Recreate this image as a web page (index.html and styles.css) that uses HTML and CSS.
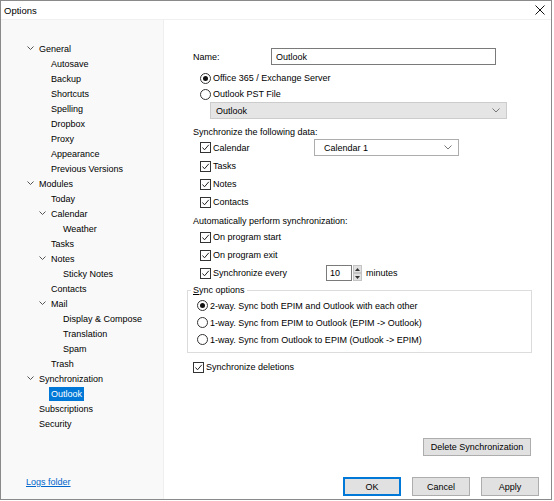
FILE: index.html
```html
<!DOCTYPE html>
<html>
<head>
<meta charset="utf-8">
<link rel="stylesheet" href="styles.css">
</head>
<body>
<div class="window">
  <div class="titlebar">
    <span class="title">Options</span>
    <svg class="close" width="10" height="10" viewBox="0 0 10 10"><path d="M0.5 0.5L9.5 9.5M9.5 0.5L0.5 9.5" stroke="#111" stroke-width="1" fill="none"/></svg>
  </div>
  <div class="main">
    <div class="sidebar">
      <ul class="tree">
        <li class="node l0"><span class="chev"><svg width="7" height="5" viewBox="0 0 7 5"><path d="M0.5 0.5L3.5 3.5L6.5 0.5" stroke="#555" fill="none"/></svg></span>General</li>
        <li class="node l1"><span class="chev"></span>Autosave</li>
        <li class="node l1"><span class="chev"></span>Backup</li>
        <li class="node l1"><span class="chev"></span>Shortcuts</li>
        <li class="node l1"><span class="chev"></span>Spelling</li>
        <li class="node l1"><span class="chev"></span>Dropbox</li>
        <li class="node l1"><span class="chev"></span>Proxy</li>
        <li class="node l1"><span class="chev"></span>Appearance</li>
        <li class="node l1"><span class="chev"></span>Previous Versions</li>
        <li class="node l0"><span class="chev"><svg width="7" height="5" viewBox="0 0 7 5"><path d="M0.5 0.5L3.5 3.5L6.5 0.5" stroke="#555" fill="none"/></svg></span>Modules</li>
        <li class="node l1"><span class="chev"></span>Today</li>
        <li class="node l1"><span class="chev"><svg width="7" height="5" viewBox="0 0 7 5"><path d="M0.5 0.5L3.5 3.5L6.5 0.5" stroke="#555" fill="none"/></svg></span>Calendar</li>
        <li class="node l2"><span class="chev"></span>Weather</li>
        <li class="node l1"><span class="chev"></span>Tasks</li>
        <li class="node l1"><span class="chev"><svg width="7" height="5" viewBox="0 0 7 5"><path d="M0.5 0.5L3.5 3.5L6.5 0.5" stroke="#555" fill="none"/></svg></span>Notes</li>
        <li class="node l2"><span class="chev"></span>Sticky Notes</li>
        <li class="node l1"><span class="chev"></span>Contacts</li>
        <li class="node l1"><span class="chev"><svg width="7" height="5" viewBox="0 0 7 5"><path d="M0.5 0.5L3.5 3.5L6.5 0.5" stroke="#555" fill="none"/></svg></span>Mail</li>
        <li class="node l2"><span class="chev"></span>Display &amp; Compose</li>
        <li class="node l2"><span class="chev"></span>Translation</li>
        <li class="node l2"><span class="chev"></span>Spam</li>
        <li class="node l1"><span class="chev"></span>Trash</li>
        <li class="node l0"><span class="chev"><svg width="7" height="5" viewBox="0 0 7 5"><path d="M0.5 0.5L3.5 3.5L6.5 0.5" stroke="#555" fill="none"/></svg></span>Synchronization</li>
        <li class="node l1"><span class="chev"></span><span class="selected">Outlook</span></li>
        <li class="node l0"><span class="chev"></span>Subscriptions</li>
        <li class="node l0"><span class="chev"></span>Security</li>
      </ul>
      <a class="logs">Logs folder</a>
    </div>
    <div class="content">
      <div class="row-name">
        <span class="name-label">Name:</span>
        <div class="textbox">Outlook</div>
      </div>
      <div class="opt r1"><span class="radio on"></span>Office 365 / Exchange Server</div>
      <div class="opt"><span class="radio"></span>Outlook PST File</div>
      <div class="combo disabled"><span>Outlook</span><svg width="8" height="5" viewBox="0 0 8 5"><path d="M0.5 0.5L4 4L7.5 0.5" stroke="#777" fill="none"/></svg></div>
      <div class="label sec1">Synchronize the following data:</div>
      <div class="opt cal-row"><span class="check"><svg width="9" height="9" viewBox="0 0 9 9"><path d="M1.5 4.5L3.5 6.8L7.8 1.8" stroke="#222" fill="none" stroke-width="1"/></svg></span><span class="cal-text">Calendar</span>
        <div class="combo cal"><span>Calendar 1</span><svg width="8" height="5" viewBox="0 0 8 5"><path d="M0.5 0.5L4 4L7.5 0.5" stroke="#777" fill="none"/></svg></div>
      </div>
      <div class="opt gap2"><span class="check"><svg width="9" height="9" viewBox="0 0 9 9"><path d="M1.5 4.5L3.5 6.8L7.8 1.8" stroke="#222" fill="none" stroke-width="1"/></svg></span>Tasks</div>
      <div class="opt gap2"><span class="check"><svg width="9" height="9" viewBox="0 0 9 9"><path d="M1.5 4.5L3.5 6.8L7.8 1.8" stroke="#222" fill="none" stroke-width="1"/></svg></span>Notes</div>
      <div class="opt gap2"><span class="check"><svg width="9" height="9" viewBox="0 0 9 9"><path d="M1.5 4.5L3.5 6.8L7.8 1.8" stroke="#222" fill="none" stroke-width="1"/></svg></span>Contacts</div>
      <div class="label sec2">Automatically perform synchronization:</div>
      <div class="opt"><span class="check"><svg width="9" height="9" viewBox="0 0 9 9"><path d="M1.5 4.5L3.5 6.8L7.8 1.8" stroke="#222" fill="none" stroke-width="1"/></svg></span>On program start</div>
      <div class="opt gap2"><span class="check"><svg width="9" height="9" viewBox="0 0 9 9"><path d="M1.5 4.5L3.5 6.8L7.8 1.8" stroke="#222" fill="none" stroke-width="1"/></svg></span>On program exit</div>
      <div class="opt gap2 every"><span class="check"><svg width="9" height="9" viewBox="0 0 9 9"><path d="M1.5 4.5L3.5 6.8L7.8 1.8" stroke="#222" fill="none" stroke-width="1"/></svg></span><span class="every-text">Synchronize every</span>
        <div class="spin"><div class="spin-box">10</div><div class="spin-btns"><span class="sb"><svg width="5" height="3" viewBox="0 0 5 3"><path d="M0 3L2.5 0L5 3Z" fill="#333"/></svg></span><span class="sb"><svg width="5" height="3" viewBox="0 0 5 3"><path d="M0 0L2.5 3L5 0Z" fill="#333"/></svg></span></div></div>
        <span class="minutes">minutes</span>
      </div>
      <fieldset class="group">
        <legend><u>S</u>ync options</legend>
        <div class="gopt"><span class="radio on"></span>2-way. Sync both EPIM and Outlook with each other</div>
        <div class="gopt"><span class="radio"></span>1-way. Sync from EPIM to Outlook (EPIM -&gt; Outlook)</div>
        <div class="gopt"><span class="radio"></span>1-way. Sync from Outlook to EPIM (Outlook -&gt; EPIM)</div>
      </fieldset>
      <div class="opt deletions"><span class="check"><svg width="9" height="9" viewBox="0 0 9 9"><path d="M1.5 4.5L3.5 6.8L7.8 1.8" stroke="#222" fill="none" stroke-width="1"/></svg></span>Synchronize deletions</div>
      <div class="spacer"></div>
      <div class="del-row"><button class="btn del">Delete Synchronization</button></div>
      <div class="btn-row">
        <button class="btn ok">OK</button>
        <button class="btn">Cancel</button>
        <button class="btn">Apply</button>
      </div>
    </div>
  </div>
</div>
</body>
</html>
```
FILE: styles.css
```css
html, body {
  margin: 0;
  padding: 0;
  background: #ffffff;
}
body {
  font-family: "Liberation Sans", Arial, sans-serif;
  font-size: 9px;
  color: #000;
  width: 554px;
  height: 501px;
  overflow: hidden;
}
.window {
  width: 552px;
  height: 500px;
  box-sizing: border-box;
  border: 1px solid #8a8a8a;
  display: flex;
  flex-direction: column;
  background: #fff;
}
.titlebar {
  height: 19px;
  flex: none;
  display: flex;
  align-items: center;
  justify-content: space-between;
  padding: 0 6px 0 3px;
  border-bottom: 1px solid #f0f0f0;
  box-sizing: border-box;
}
.title { font-size: 9.5px; }
.main {
  flex: 1;
  display: flex;
  min-height: 0;
}
.sidebar {
  width: 163px;
  flex: none;
  box-sizing: border-box;
  background: #f9f9f9;
  border-right: 1px solid #efefef;
  display: flex;
  flex-direction: column;
  padding-bottom: 9px;
}
.tree {
  list-style: none;
  margin: 0;
  padding: 21px 0 0 0;
}
.node {
  height: 15px;
  display: flex;
  align-items: center;
  white-space: nowrap;
}
.l0 { padding-left: 26px; }
.l1 { padding-left: 38px; }
.l2 { padding-left: 50px; }
.chev {
  width: 12px;
  flex: none;
  display: flex;
  align-items: center;
}
.selected {
  background: #0078d7;
  color: #fff;
  padding: 1px 2px;
  margin-left: -2px;
  line-height: 12px;
}
.logs {
  margin-top: auto;
  margin-left: 25px;
  color: #0066cc;
  text-decoration: underline;
  line-height: 15px;
}
.content {
  flex: 1;
  display: flex;
  flex-direction: column;
  padding: 28px 12px 3px 29px;
  box-sizing: border-box;
}
.row-name {
  display: flex;
  align-items: center;
  height: 17px;
}
.name-label { width: 78px; }
.textbox {
  width: 225px;
  height: 17px;
  box-sizing: border-box;
  border: 1px solid #7a7a7a;
  padding-left: 4px;
  display: flex;
  align-items: center;
}
.opt {
  display: flex;
  align-items: center;
  height: 16px;
  margin-left: 7px;
  white-space: nowrap;
}
.r1 { margin-top: 5px; }
.gap2 { margin-top: 2px; }
.radio {
  width: 11px;
  height: 11px;
  box-sizing: border-box;
  border: 1px solid #333;
  border-radius: 50%;
  margin-right: 2px;
  flex: none;
  display: flex;
  align-items: center;
  justify-content: center;
}
.radio.on::after {
  content: "";
  width: 5px;
  height: 5px;
  border-radius: 50%;
  background: #111;
}
.check {
  width: 11px;
  height: 11px;
  box-sizing: border-box;
  border: 1px solid #333;
  margin-right: 2px;
  flex: none;
  display: flex;
  align-items: center;
  justify-content: center;
  background: #fff;
}
.combo {
  height: 17px;
  box-sizing: border-box;
  display: flex;
  align-items: center;
  justify-content: space-between;
  padding: 0 6px 0 5px;
}
.combo.disabled {
  margin-left: 17px;
  width: 297px;
  background: #e5e5e5;
  border: 1px solid #cccccc;
}
.label {
  height: 15px;
  display: flex;
  align-items: center;
}
.sec1 { margin-top: 5px; }
.sec2 { margin-top: 3px; height: 16px; }
.cal-row { height: 17px; }
.cal-text { width: 101px; }
.combo.cal {
  width: 145px;
  border: 1px solid #adadad;
  background: #fff;
  padding-left: 9px;
}
.every { height: 16px; }
.every-text { width: 113px; }
.spin {
  display: flex;
  height: 16px;
}
.spin-box {
  width: 26px;
  height: 16px;
  box-sizing: border-box;
  border: 1px solid #7a7a7a;
  padding-left: 3px;
  display: flex;
  align-items: center;
}
.spin-btns {
  display: flex;
  flex-direction: column;
  width: 9px;
  margin-left: 1px;
  height: 16px;
}
.sb {
  flex: 1;
  background: #e1e1e1;
  border: 1px solid #c4c4c4;
  display: flex;
  align-items: center;
  justify-content: center;
}
.minutes { margin-left: 4px; }
.group {
  margin: 2px 0 0 -6px;
  width: 345px;
  box-sizing: border-box;
  border: 1px solid #dcdcdc;
  padding: 0 0 4px 4px;
}
.group legend {
  padding: 0 2px;
  margin-left: -1px;
  line-height: 14px;
}
.gopt {
  display: flex;
  align-items: center;
  height: 17px;
  margin-left: 5px;
  white-space: nowrap;
}
.deletions { margin-left: 0; margin-top: 6px; }
.spacer { flex: 1; }
.del-row {
  display: flex;
  justify-content: flex-end;
  padding-right: 8px;
}
.btn {
  font-family: inherit;
  font-size: inherit;
  color: #000;
  background: #e1e1e1;
  border: 1px solid #adadad;
  border-radius: 0;
  margin: 0;
  padding: 0;
  height: 19px;
  width: 58px;
  box-sizing: border-box;
}
.btn.del { width: 108px; height: 18px; }
.btn-row {
  display: flex;
  justify-content: flex-end;
  gap: 11px;
  margin-top: 21px;
}
.btn.ok {
  border: 2px solid #0078d7;
}
```
